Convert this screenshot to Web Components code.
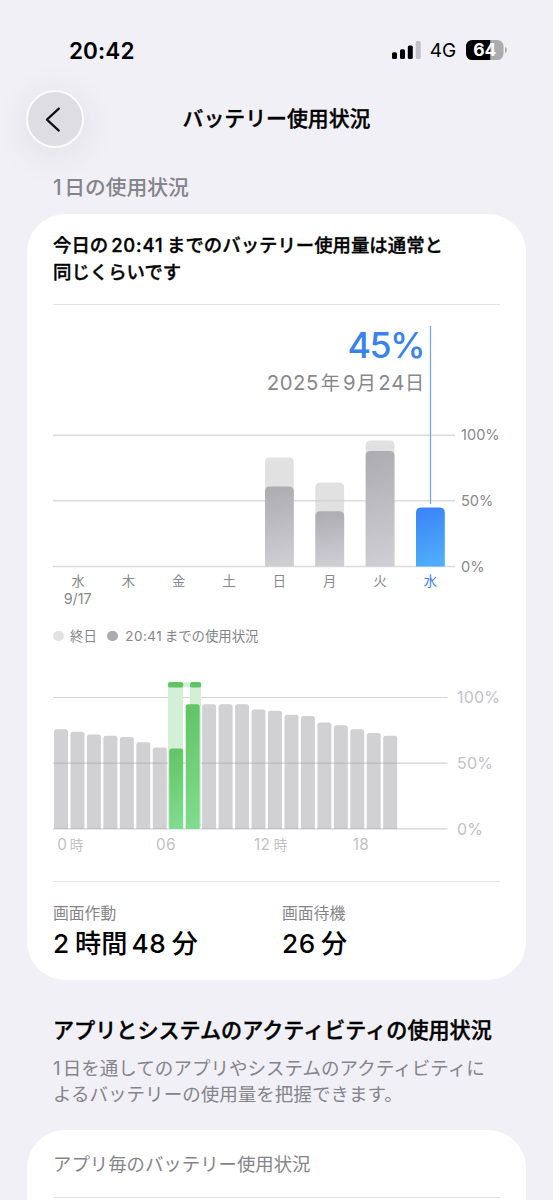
<!DOCTYPE html>
<html lang="ja">
<head>
<meta charset="utf-8">
<meta name="viewport" content="width=device-width, initial-scale=1">
<title>バッテリー使用状況</title>
<style>
    *{
        box-sizing: border-box;
    }
    body{
        margin: 0;
        height: 1200px;
        overflow: hidden;
        background: #f1f0f6;
        color: #000;
        font-family: Inter, 'Noto Sans CJK JP', sans-serif;
        font-size: 18.4px;
        line-height: 26.5px;
        white-space: nowrap;
        text-autospace: no-autospace;
    }
</style>
</head>
<body>
    <status-bar time="20:42" network="4G" level="64"></status-bar>
    <nav-header>バッテリー使用状況</nav-header>
    <main>
        <section-label><num-run>1</num-run>日の使用状況</section-label>
        <inset-card>
            <card-headline>今日の<num-run gap>20:41</num-run>までのバッテリー使用量は通常と<br>同じくらいです</card-headline>
            <day-chart></day-chart>
            <chart-legend></chart-legend>
            <hour-chart></hour-chart>
            <stat-row>
                <usage-stat label="画面作動"><num-run after>2</num-run>時間<num-run gap>48</num-run>分</usage-stat>
                <usage-stat label="画面待機"><num-run after>26</num-run>分</usage-stat>
            </stat-row>
        </inset-card>
        <section-intro>
            <span slot="title">アプリとシステムのアクティビティの使用状況</span>
            <num-run>1</num-run>日を通してのアプリやシステムのアクティビティに<br>よるバッテリーの使用量を把握できます。
        </section-intro>
        <inset-card>
            <list-header>アプリ毎のバッテリー使用状況</list-header>
        </inset-card>
    </main>

<script>
class BaseElement extends HTMLElement{
    constructor() {
        super();
        this.attachShadow({ mode: 'open' });
    }

    connectedCallback() {
        this.shadowRoot.innerHTML = this.render();
    }
}

// digits set inside japanese text, with a little air around them
class NumRun extends BaseElement{
    render() {
        return `
            <style>
                :host{ display: inline; margin-right: .12em; letter-spacing: var(--num-spacing, 0); }
                :host([gap]){ margin: 0 .2em 0 .16em; }
                :host([after]){ margin-right: .2em; }
            </style>
            <slot></slot>
        `.replace(/>\s+</g, '><').trim();
    }
}

class StatusBar extends BaseElement{
    render() {
        return `
            <style>
                :host{
                    display: flex;
                    justify-content: space-between;
                    align-items: center;
                    height: 90px;
                    padding: 12px 46px 0 69px;
                }
                .time{ padding-top: 1px; font-size: 22.5px; font-weight: 600; letter-spacing: .1px; }
                .right{ display: flex; align-items: center; margin-top: -3px; }
                .network{ font-size: 19px; margin: 4px 10px 0 9px; letter-spacing: -.1px; }
                svg{ display: block; }
            </style>
            <span class="time">${this.getAttribute('time')}</span>
            <div class="right">
                <svg width="29" height="18" viewBox="0 0 29 18">
                    <rect x="0" y="11.2" width="5" height="6.8" rx="1.6"/>
                    <rect x="8" y="8.2" width="5" height="9.8" rx="1.6"/>
                    <rect x="15.8" y="4.5" width="5" height="13.5" rx="1.6"/>
                    <rect x="23.7" y="0" width="5" height="18" rx="1.6" fill="#c2c2c6"/>
                </svg>
                <span class="network">${this.getAttribute('network')}</span>
                <svg width="41" height="20" viewBox="0 0 41 20">
                    <defs><clipPath id="shell"><rect width="37.5" height="20" rx="6.3"/></clipPath></defs>
                    <g clip-path="url(#shell)">
                        <rect width="38" height="20" fill="#abaaaf"/>
                        <rect width="24.2" height="20"/>
                    </g>
                    <path d="M39 7c1.2.4 1.9 1.6 1.9 3s-.7 2.6-1.9 3z" fill="#abaaaf"/>
                    <text x="18.8" y="16.4" fill="#fff" font-size="17.5" font-weight="700" text-anchor="middle">${this.getAttribute('level')}</text>
                </svg>
            </div>
        `;
    }
}

class NavHeader extends BaseElement{
    render() {
        return `
            <style>
                :host{
                    display: grid;
                    grid-template-columns: 58px 1fr 58px;
                    align-items: center;
                    height: 58px;
                    margin: 0 27px;
                }
                button{
                    width: 58px;
                    height: 58px;
                    margin: -1px 0 0 -1px;
                    padding: 0;
                    border: 2px solid #fbfbfd;
                    border-radius: 50%;
                    background: #dedde2;
                    box-shadow: 0 6px 34px 4px rgba(60, 60, 80, .07);
                }
                svg{ display: block; }
                h1{
                    margin: 0;
                    font-size: 20.9px;
                    font-weight: 500;
                    -webkit-text-stroke: .35px;
                    text-align: center;
                }
            </style>
            <button aria-label="戻る">
                <svg width="54" height="54" viewBox="0 0 54 54" fill="none" stroke="#111" stroke-width="2.2" stroke-linecap="round" stroke-linejoin="round">
                    <path d="M30.8 16.6L18.9 27.6L30.8 38.6"/>
                </svg>
            </button>
            <h1><slot></slot></h1>
        `;
    }
}

class SectionLabel extends BaseElement{
    render() {
        return `
            <style>
                :host{
                    display: block;
                    margin: 26.5px 53px 13px;
                    color: #85848a;
                    font-size: 20.8px;
                    font-weight: 500;
                }
            </style>
            <slot></slot>
        `;
    }
}

class InsetCard extends BaseElement{
    render() {
        return `
            <style>
                :host{
                    display: flow-root;
                    margin: 0 27px;
                    padding: 0 26px;
                    border-radius: 38px;
                    background: #fff;
                }
            </style>
            <slot></slot>
        `;
    }
}

class CardHeadline extends BaseElement{
    render() {
        return `
            <style>
                :host{
                    display: block;
                    height: 91px;
                    padding-top: 18px;
                    border-bottom: 1px solid #e2e2e4;
                    font-weight: 500;
                    -webkit-text-stroke: .35px;
                    --num-spacing: .85px;
                }
            </style>
            <slot></slot>
        `;
    }
}

const days = [
    { name: '水', date: '9/17' },
    { name: '木' },
    { name: '金' },
    { name: '土' },
    { name: '日', full: 83, used: 61 },
    { name: '月', full: 64, used: 42 },
    { name: '火', full: 96, used: 88 },
    { name: '水', used: 45, today: true }
];

// path of a bar that stands on the base line and is round at the top only
const bar = (x, y, w, base, r) =>
    `M${x} ${base}V${y + r}q0 ${-r} ${r} ${-r}h${w - 2 * r}q${r} 0 ${r} ${r}V${base}z`;

class DayChart extends BaseElement{
    render() {
        const base = 261.5;
        const y = value => base - value * 1.313;
        const step = 50.33;

        const bars = days.map((day, i) => {
            const x = 10.7 + i * step;
            let out = '';
            if (day.full) out += `<path d="${bar(x, y(day.full), 28.8, base, 5)}" fill="#e1e1e2"/>`;
            if (day.used) out += `<path d="${bar(x, y(day.used), 28.8, base, 5)}" fill="url(#${day.today ? 'blue' : 'gray'})"/>`;
            return out;
        }).join('');

        const names = days.map((day, i) => `
            <text x="${25.1 + i * step}" y="280.7" text-anchor="middle" font-size="13.3" class="${day.today ? 'today' : ''}">${day.name}</text>
            ${day.date ? `<text x="24.7" y="299" text-anchor="middle" font-size="14.3">${day.date}</text>` : ''}
        `).join('');

        return `
            <style>
                :host{ display: block; height: 318px; }
                svg{ display: block; overflow: visible; }
                text{ fill: #88878c; }
                .today{ fill: #3a82f0; }
                .value{ fill: #3a82ee; font-size: 35.8px; font-weight: 500; }
                .grid{ stroke: #dbdbdd; stroke-width: 1.4; }
            </style>
            <svg width="447" height="318" viewBox="0 0 447 318">
                <defs>
                    <linearGradient id="gray" x1="0" y1="0" x2=".08" y2="1"><stop stop-color="#acabb0"/><stop offset="1" stop-color="#cecdd3"/></linearGradient>
                    <linearGradient id="blue" x1="0" y1="0" x2=".15" y2="1"><stop stop-color="#3a82f6"/><stop offset="1" stop-color="#4eacfa"/></linearGradient>
                </defs>
                <path class="grid" d="M0 130.2h402M0 195.8h402M0 261.5h402"/>
                ${bars}
                <path d="M262.3 195.8h28.8" stroke="#cfcfd1" stroke-width="1.2"/>
                <path d="M377.5 21v178" stroke="#6ba3ee" stroke-width="1.2"/>
                <text class="value" x="294.5" y="53" textLength="78">45%</text>
                <text y="84.8" font-size="20.3">
                    <tspan x="213.8" textLength="51.5">2025</tspan><tspan x="267.8" font-size="19.2">年</tspan><tspan x="290">9</tspan><tspan x="303.8" font-size="19.2">月</tspan><tspan x="325.3" textLength="26">24</tspan><tspan x="352" font-size="19.2">日</tspan>
                </text>
                <g font-size="14.6">
                    <text x="408" y="135">100%</text>
                    <text x="408" y="200.7">50%</text>
                    <text x="408" y="266.6">0%</text>
                </g>
                ${names}
            </svg>
        `;
    }
}

class ChartLegend extends BaseElement{
    render() {
        return `
            <style>
                :host{
                    display: flex;
                    align-items: center;
                    height: 26px;
                    font-size: 13.4px;
                    color: #85848a;
                    --num-spacing: .5px;
                }
                i{
                    flex: none;
                    width: 10.5px;
                    height: 10.5px;
                    margin-right: 6.5px;
                    border-radius: 50%;
                    background: #e1e1e2;
                }
                i.used{ margin: 0 7.5px 0 10.5px; background: #acabb0; }
            </style>
            <i></i><span>終日</span>
            <i class="used"></i><span><num-run after>20:41</num-run>までの使用状況</span>
        `;
    }
}

const levels = [76, 74, 72, 71, 70, 66, 62, 61.2, 95, 95, 95, 95, 91, 90, 87, 86, 81, 79, 76, 73, 71];

class HourChart extends BaseElement{
    render() {
        const base = 180;
        const bars = levels.map((level, i) => {
            const charging = i === 7 || i === 8;
            return `<path d="${bar(1 + i * 16.46, base - level * 1.314, 14, base, 2.5)}" fill="${charging ? 'url(#green)' : '#d1d1d3'}"/>`;
        });
        const green = bars.splice(7, 2).join('');

        return `
            <style>
                :host{ display: block; height: 233px; border-bottom: 1px solid #e2e2e4; }
                svg{ display: block; overflow: visible; }
                text{ fill: #c1c1c5; font-size: 15.3px; letter-spacing: .4px; }
                .percent text{ font-size: 16px; letter-spacing: .2px; }
                .cjk{ font-size: 13.5px; }
                .grid{ stroke: #99999d; stroke-opacity: .43; stroke-width: 1.2; }
            </style>
            <svg width="447" height="232" viewBox="0 0 447 232">
                <defs>
                    <linearGradient id="green" x1="0" y1="0" x2=".1" y2="1"><stop stop-color="#61c364"/><stop offset="1" stop-color="#7fdb8d"/></linearGradient>
                </defs>
                ${bars.join('')}
                <path class="grid" d="M0 48.5h394.5M0 114.2h394.5M0 179.8h394.5"/>
                <path d="M115 36h15v144h-15zM137 36h11v144h-11z" fill="#d3f0d7"/>
                <rect x="130" y="33.3" width="7" height="5" fill="#d3f0d7"/>
                ${green}
                <rect x="115" y="33" width="15.2" height="5.6" rx="2.2" fill="#61c364"/>
                <rect x="137" y="33" width="11.2" height="5.6" rx="2.2" fill="#61c364"/>
                <g class="percent">
                    <text x="404" y="54">100%</text>
                    <text x="404" y="119.8">50%</text>
                    <text x="404" y="185.5">0%</text>
                </g>
                <text x="4.3" y="200.6">0<tspan class="cjk" dx="2.5">時</tspan></text>
                <text x="103" y="200.6">06</text>
                <text x="201" y="200.6">12<tspan class="cjk" dx="3.5">時</tspan></text>
                <text x="299.7" y="200.6">18</text>
            </svg>
        `;
    }
}

class StatRow extends BaseElement{
    render() {
        return `
            <style>
                :host{ display: grid; grid-template-columns: 229px 1fr; height: 98px; padding-top: 18px; }
            </style>
            <slot></slot>
        `;
    }
}

class UsageStat extends BaseElement{
    render() {
        return `
            <style>
                :host{ display: block; }
                .label{ color: #85848a; font-size: 15.8px; line-height: 28px; }
                .value{ --num-spacing: .6px; font-size: 26.2px; font-weight: 500; line-height: 32px; }
            </style>
            <div class="label">${this.getAttribute('label')}</div>
            <div class="value"><slot></slot></div>
        `;
    }
}

class SectionIntro extends BaseElement{
    render() {
        return `
            <style>
                :host{ display: block; height: 150px; padding: 37px 53px 0; }
                h2{
                    margin: 0 0 10.5px;
                    font-size: 21.1px;
                    font-weight: 500;
                    -webkit-text-stroke: .4px;
                    line-height: 27px;
                }
                p{ margin: 0; color: #85848a; font-size: 18.55px; }
            </style>
            <h2><slot name="title"></slot></h2>
            <p><slot></slot></p>
        `;
    }
}

class ListHeader extends BaseElement{
    render() {
        return `
            <style>
                :host{
                    display: flex;
                    align-items: center;
                    height: 68px;
                    margin-bottom: 60px;
                    padding-top: 2px;
                    border-bottom: 1px solid #e2e2e4;
                    color: #85848a;
                }
            </style>
            <slot></slot>
        `;
    }
}

customElements.define('num-run', NumRun);
customElements.define('status-bar', StatusBar);
customElements.define('nav-header', NavHeader);
customElements.define('section-label', SectionLabel);
customElements.define('inset-card', InsetCard);
customElements.define('card-headline', CardHeadline);
customElements.define('day-chart', DayChart);
customElements.define('chart-legend', ChartLegend);
customElements.define('hour-chart', HourChart);
customElements.define('stat-row', StatRow);
customElements.define('usage-stat', UsageStat);
customElements.define('section-intro', SectionIntro);
customElements.define('list-header', ListHeader);
</script>
</body>
</html>
